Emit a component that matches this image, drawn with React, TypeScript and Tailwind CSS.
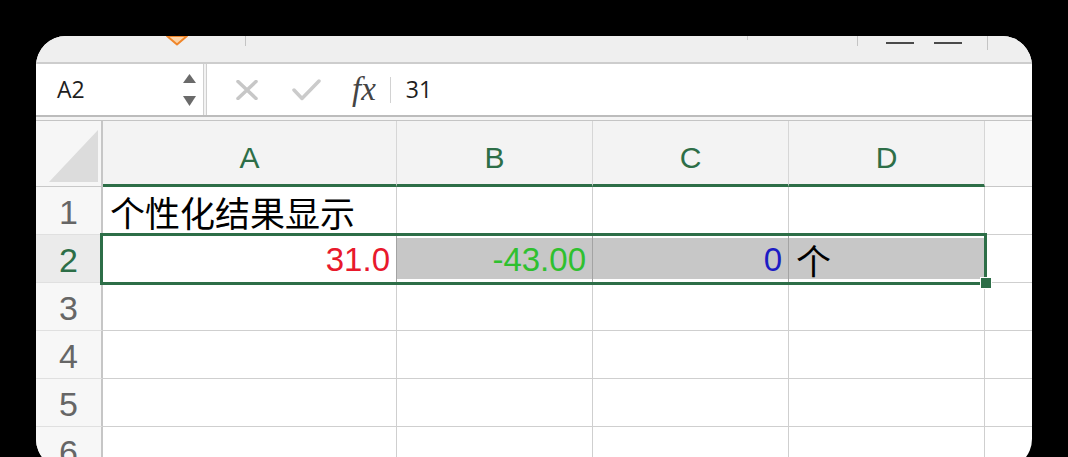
import { JSX } from "react";

const SANS = "font-['Liberation_Sans','Noto_Sans_CJK_SC',sans-serif]";

function TitleStrip(): JSX.Element {
    return (
        <div className="flex h-[28px] shrink-0 items-start border-b-2 border-[#cdcdcd] bg-[#efefef]">
            <svg width="22" height="10" viewBox="0 0 22 10" className="ml-[130px]">
                <polygon points="1,0 11,8.5 21,0" fill="#fcd3a6" stroke="#f0862a" strokeWidth="2" strokeLinejoin="round" />
            </svg>
            <div className="ml-[57px] h-[10px] w-px bg-[#c4c4c4]" />
            <div className="ml-[501px] h-[4px] w-px bg-[#cccccc]" />
            <div className="ml-[109px] h-[10px] w-px bg-[#c4c4c4]" />
            <div className="mt-[6px] ml-[28px] h-[2px] w-[28px] bg-[#4a4a4a]" />
            <div className="mt-[6px] ml-[20px] h-[2px] w-[28px] bg-[#4a4a4a]" />
            <div className="ml-[25px] h-[14px] w-px bg-[#c4c4c4]" />
        </div>
    );
}

function FormulaBar(): JSX.Element {
    return (
        <div className="shrink-0">
            <div className="flex h-[53px] items-center border-b-2 border-[#bcbcbc] bg-white">
                <div className="flex h-full w-[167px] items-center justify-between pr-[7px] pl-[21px]">
                    <span className="font-['Open_Sans',sans-serif] text-[23px] leading-none text-[#1e1e1e]">A2</span>
                    <div className="flex flex-col gap-[13px]">
                        <svg width="13" height="9" viewBox="0 0 13 9">
                            <polygon points="6.5,0 13,9 0,9" fill="#6a6a6a" />
                        </svg>
                        <svg width="13" height="10" viewBox="0 0 13 10">
                            <polygon points="0,0 13,0 6.5,10" fill="#6a6a6a" />
                        </svg>
                    </div>
                </div>
                <div className="h-full w-[4px] border-x border-[#cfcfcf] bg-[#f2f2f2]" />
                <svg width="22" height="20" viewBox="0 0 22 20" className="ml-[29px]">
                    <path d="M2 1.5 L20 18.5 M20 1.5 L2 18.5" stroke="#c7c7c7" strokeWidth="3.5" strokeLinecap="round" />
                </svg>
                <svg width="29" height="22" viewBox="0 0 29 22" className="ml-[34px]">
                    <polyline points="2,11 10,19.5 27,2" fill="none" stroke="#cbcbcb" strokeWidth="3.5" strokeLinecap="round" strokeLinejoin="round" />
                </svg>
                <span className="ml-[31px] font-['Liberation_Serif',serif] text-[33px] leading-none text-[#444] italic">
                    fx
                </span>
                <div className="ml-[14px] h-[26px] w-px bg-[#d2d2d2]" />
                <span className="ml-[15px] font-['Open_Sans',sans-serif] text-[23px] leading-none text-[#1e1e1e]">31</span>
            </div>
            <div className="h-[4px] border-b border-[#c4c4c4] bg-[#f4f4f4]" />
        </div>
    );
}

function ColHeader({ letter }: { letter: string }): JSX.Element {
    return (
        <div
            className={`flex h-[66px] items-center justify-center border-r border-b-[3px] border-r-[#d6d6d6] border-b-[#2d6e47] bg-[#f3f3f3] pt-[11px] text-[30px] leading-none text-[#2d6e47] ${SANS}`}
        >
            {letter}
        </div>
    );
}

function RowHeader({ n, active }: { n: number; active?: boolean }): JSX.Element {
    return (
        <div
            className={`flex h-[48px] items-center justify-center border-r-2 border-b border-r-[#c6c6c6] border-b-[#e0e0e0] pt-[3px] text-[34px] leading-none ${SANS} ${
                active ? "bg-[#ebebeb] text-[#2d6e47]" : "bg-[#f7f7f7] text-[#666666]"
            }`}
        >
            {n}
        </div>
    );
}

function Cell({ children, right }: { children?: React.ReactNode; right?: boolean }): JSX.Element {
    return (
        <div
            className={`flex h-[48px] items-center border-r border-b border-[#cfcfcf] pt-[2px] leading-none ${SANS} ${
                right ? "justify-end pr-[6px]" : "pl-[7px]"
            }`}
        >
            {children}
        </div>
    );
}

function SelCell({ children, right, last }: { children?: React.ReactNode; right?: boolean; last?: boolean }): JSX.Element {
    return (
        <div
            className={`h-[48px] border-b border-[#cfcfcf] py-[3px] ${last ? "border-r border-r-[#cfcfcf]" : "border-r border-r-[#a3a3a3]"}`}
        >
            <div
                className={`flex h-full items-center bg-[#c7c7c7] pt-[2px] leading-none ${SANS} ${
                    right ? "justify-end pr-[6px]" : "pl-[7px]"
                }`}
            >
                {children}
            </div>
        </div>
    );
}

function Grid(): JSX.Element {
    const rest = [3, 4, 5, 6];
    return (
        <div className="relative grid grid-cols-[67px_294px_196px_196px_196px_1fr]">
            <div className="relative h-[66px] border-r-2 border-b border-r-[#c6c6c6] border-b-[#c8c8c8] bg-[#f6f6f6]">
                <svg width="65" height="65" viewBox="0 0 65 65" className="block">
                    <polygon points="13,61 62,9 62,61" fill="#dcdcdc" />
                </svg>
            </div>
            <ColHeader letter="A" />
            <ColHeader letter="B" />
            <ColHeader letter="C" />
            <ColHeader letter="D" />
            <div className="h-[66px] border-b border-[#c8c8c8] bg-[#f8f8f8]" />

            <RowHeader n={1} />
            <Cell>
                <span className="font-['Noto_Sans_CJK_SC',sans-serif] text-[35px] text-black">个性化结果显示</span>
            </Cell>
            <Cell />
            <Cell />
            <Cell />
            <div className="h-[48px] border-b border-[#cfcfcf]" />

            <RowHeader n={2} active />
            <div className="flex h-[48px] items-center justify-end border-r border-b border-r-[#a3a3a3] border-b-[#cfcfcf] pt-[2px] pr-[6px]">
                <span className={`text-[33px] leading-none text-[#e8192c] ${SANS}`}>31.0</span>
            </div>
            <SelCell right>
                <span className="text-[33px] text-[#2fc02f]">-43.00</span>
            </SelCell>
            <SelCell right>
                <span className="text-[33px] text-[#1c1cc4]">0</span>
            </SelCell>
            <SelCell last>
                <span className="font-['Noto_Sans_CJK_SC',sans-serif] text-[35px] text-black">个</span>
            </SelCell>
            <div className="h-[48px] border-b border-[#cfcfcf]" />

            {rest.map((n) => (
                <div key={n} className="contents">
                    <RowHeader n={n} />
                    <Cell />
                    <Cell />
                    <Cell />
                    <Cell />
                    <div className="h-[48px] border-b border-[#cfcfcf]" />
                </div>
            ))}

            <div className="pointer-events-none absolute top-[112px] left-[64px] h-[52px] w-[887px] border-[3px] border-[#2d6e47]" />
            <div className="pointer-events-none absolute top-[156px] left-[944px] h-[12px] w-[12px] border border-white bg-[#2d6e47]" />
        </div>
    );
}

export default function App(): JSX.Element {
    return (
        <div className="h-[457px] w-[1068px] overflow-hidden bg-black pt-[36px] pl-[36px]">
            <div className="flex h-[433px] w-[996px] flex-col overflow-hidden rounded-[30px] bg-white">
                <TitleStrip />
                <FormulaBar />
                <Grid />
            </div>
        </div>
    );
}
